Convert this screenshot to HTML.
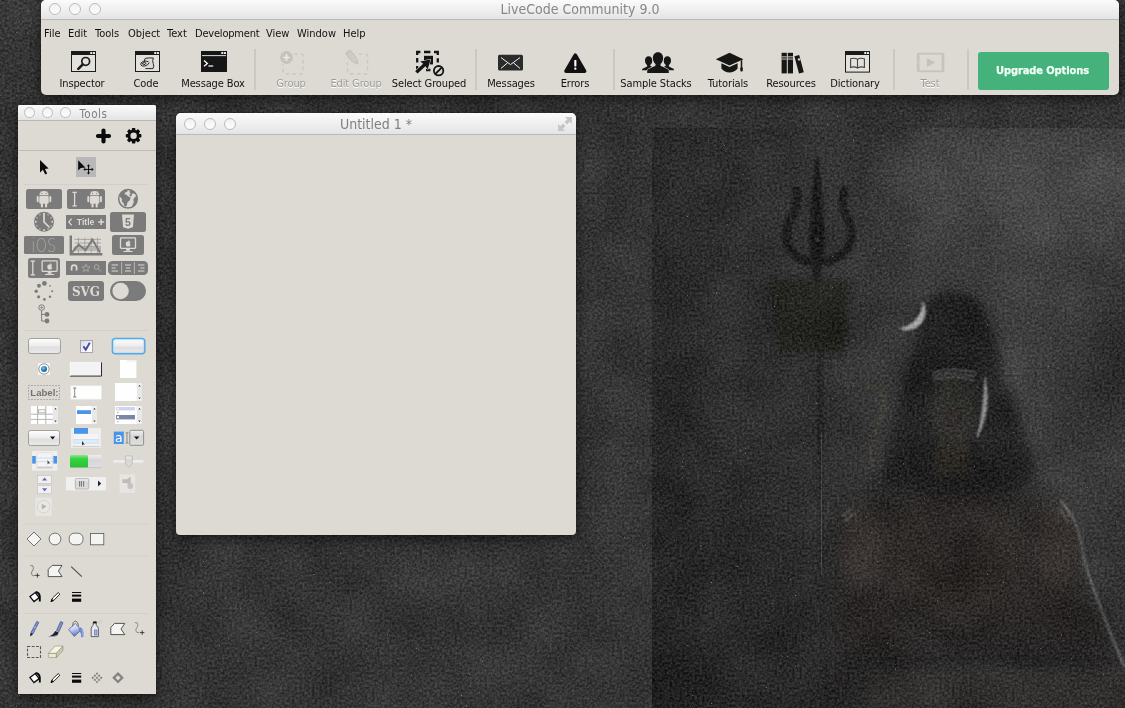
<!DOCTYPE html>
<html lang="en">
<head>
<meta charset="utf-8">
<title>LiveCode Community 9.0</title>
<style>
*{box-sizing:border-box;margin:0;padding:0}
html,body{width:1125px;height:708px;overflow:hidden}
body{position:relative;background:#343434;font-family:"DejaVu Sans Condensed","DejaVu Sans","Liberation Sans",sans-serif;font-size:11px;color:#111}
.abs{position:absolute}
#desk{position:absolute;left:0;top:0;width:1125px;height:708px;overflow:hidden}
.win{position:absolute;will-change:transform;background:#dddad3;border-radius:5px 5px 0 0;box-shadow:0 4px 14px rgba(0,0,0,.55),0 0 1px rgba(0,0,0,.7)}
.tb{position:absolute;left:0;top:0;right:0;border-radius:5px 5px 0 0;background:linear-gradient(#fbfbfb,#e4e4e4);border-bottom:1px solid #b9b9b9}
.tl{position:absolute;width:12px;height:12px;border-radius:50%;border:1px solid #bcbcbc;background:linear-gradient(#f1f1f1,#fdfdfd)}
.ttl{position:absolute;left:0;right:0;text-align:center;color:#808080;white-space:nowrap}
/* main window */
#main{left:41px;top:0;width:1078px;height:95px;border-radius:5px}
#main .tb{height:20px}
#main .ttl{top:0;font-size:14px;line-height:19px;color:#878787}
.menu{position:absolute;top:26px;font-size:11px;line-height:16px;white-space:nowrap;color:#111}
.tool{position:absolute;top:77px;letter-spacing:-0.12px;font-size:11px;line-height:14px;white-space:nowrap;text-align:center;transform:translateX(-50%);color:#111}
.tool.dis{color:#9c9c9c;text-shadow:0 1px 0 #fff}
.sep{position:absolute;top:49px;width:2px;height:41px;background:#cbc8c1}
#upg{position:absolute;left:937px;top:52px;width:131px;height:38px;border-radius:3px;background:#45b17b;color:#f0fff6;font-weight:bold;font-size:11px;line-height:37px;letter-spacing:-0.1px;padding-right:2px;-webkit-text-stroke:0.25px #f0fff6;text-align:center}
/* tools */
#tools{left:18px;top:105px;width:138px;height:588.5px;border-radius:2px 2px 0 0}
#tools .tb{height:16px;border-radius:2px 2px 0 0}
#tools .ttl{top:1.5px;font-size:11.5px;line-height:15px;text-align:left;left:61.5px;letter-spacing:0.5px}
.hr{position:absolute;left:8px;width:122px;height:1px;background:#cfccc5}
/* stack */
#stack{left:176px;top:113px;width:400px;height:422px;border-radius:5px 5px 4px 4px}
#stack .tb{height:22px}
#stack .ttl{top:0;font-size:14px;line-height:22px}
</style>
</head>
<body>
<div id="desk">
<svg width="1125" height="708" viewBox="0 0 1125 708">
  <defs>
    <filter id="grain" x="0" y="0" width="100%" height="100%" color-interpolation-filters="sRGB">
      <feTurbulence type="fractalNoise" baseFrequency="0.4" numOctaves="3" seed="11" result="n"/>
      <feColorMatrix in="n" type="matrix" values="1 0 0 0 0  1 0 0 0 0  1 0 0 0 0  0 0 0 0 1" result="g"/>
      <feComposite in="SourceGraphic" in2="g" operator="arithmetic" k1="0" k2="1" k3="0.26" k4="-0.13" result="c1"/>
      <feTurbulence type="fractalNoise" baseFrequency="0.02" numOctaves="2" seed="5" result="n2"/>
      <feColorMatrix in="n2" type="matrix" values="1 0 0 0 0  1 0 0 0 0  1 0 0 0 0  0 0 0 0 1" result="g2"/>
      <feComposite in="c1" in2="g2" operator="arithmetic" k1="0" k2="1" k3="0.09" k4="-0.045" result="c2"/>
      <feTurbulence type="fractalNoise" baseFrequency="0.38" numOctaves="1" seed="23" result="n3"/>
      <feColorMatrix in="n3" type="matrix" values="0 0 0 0 0.62  0 0 0 0 0.62  0 0 0 0 0.62  10 0 0 0 -7.7" result="sp"/>
      <feMerge><feMergeNode in="c2"/><feMergeNode in="sp"/></feMerge>
    </filter>
    <filter id="b3" x="-20%" y="-20%" width="140%" height="140%"><feGaussianBlur stdDeviation="3"/></filter>
    <filter id="b5" x="-30%" y="-30%" width="160%" height="160%"><feGaussianBlur stdDeviation="5"/></filter>
    <filter id="b8" x="-30%" y="-30%" width="160%" height="160%"><feGaussianBlur stdDeviation="8"/></filter>
    <filter id="b20" x="-50%" y="-50%" width="200%" height="200%"><feGaussianBlur stdDeviation="22"/></filter>
    <filter id="b1" x="-20%" y="-20%" width="140%" height="140%"><feGaussianBlur stdDeviation="0.8"/></filter>
    <linearGradient id="picg" x1="0" y1="0" x2="1" y2="0"><stop offset="0" stop-color="#2a2a2a"/><stop offset="0.3" stop-color="#323232"/><stop offset="0.65" stop-color="#3b3b3b"/><stop offset="1" stop-color="#3e3e3e"/></linearGradient>
    <linearGradient id="picv" x1="0" y1="0" x2="0" y2="1"><stop offset="0" stop-color="#000" stop-opacity="0"/><stop offset="0.55" stop-color="#000" stop-opacity="0.02"/><stop offset="1" stop-color="#000" stop-opacity="0.28"/></linearGradient>
    <clipPath id="picclip"><rect x="652" y="128" width="473" height="580"/></clipPath>
  </defs>
  <g filter="url(#grain)">
    <rect width="1125" height="708" fill="#353535"/>
    <rect x="652" y="128" width="473" height="580" fill="url(#picg)"/>
    <g clip-path="url(#picclip)">
      <!-- haze -->
      <rect x="652" y="128" width="473" height="580" fill="url(#picv)"/>
      <ellipse cx="1030" cy="185" rx="130" ry="60" fill="#4a4a4a" filter="url(#b20)" opacity="0.900"/>
      <ellipse cx="1030" cy="330" rx="26" ry="90" fill="#474747" filter="url(#b20)" opacity="0.800"/>
      <ellipse cx="1105" cy="375" rx="40" ry="65" fill="#2c2c2c" filter="url(#b20)" opacity="0.800"/>
      <ellipse cx="760" cy="620" rx="90" ry="110" fill="#292929" filter="url(#b20)" opacity="0.700"/>
      <!-- body -->
      <path d="M838 708 L836 570 Q838 520 880 500 L925 482 L985 482 L1030 496 Q1066 508 1072 560 L1125 680 V708Z" fill="#2a2827" filter="url(#b8)" opacity="0.85"/>
      <ellipse cx="955" cy="560" rx="70" ry="60" fill="#302d2a" filter="url(#b8)" opacity="0.700"/>
      <rect x="840" y="650" width="285" height="58" fill="#262626" filter="url(#b8)" opacity="0.800"/>
      <ellipse cx="862" cy="545" rx="22" ry="42" fill="#3a3632" filter="url(#b8)" opacity="0.800"/>
      <ellipse cx="1056" cy="545" rx="22" ry="46" fill="#3a3632" filter="url(#b8)" opacity="0.800"/>
      <path d="M915 490 L955 600 L1000 490Z" fill="#252321" filter="url(#b8)" opacity="0.600"/>
      <rect x="870" y="668" width="255" height="40" fill="#3a3734" filter="url(#b5)" opacity="0.600"/>
      <!-- hair -->
      <ellipse cx="951" cy="317" rx="30" ry="23" fill="#222" filter="url(#b3)" opacity="0.900"/>
      <path d="M954 292 Q980 294 988 322 Q1000 350 1004 382 Q1016 410 1024 434 Q1034 460 1036 478 Q1000 504 955 494 Q905 502 882 476 Q884 450 891 432 Q900 395 910 358 Q916 330 926 312 Q936 292 954 292Z" fill="#222222" filter="url(#b5)" opacity="0.900"/>
      <!-- face + neck -->
      <ellipse cx="954" cy="410" rx="23" ry="36" fill="#33302d" filter="url(#b5)" opacity="0.900"/>
      <path d="M938 440 h30 l4 36 h-38z" fill="#2e2b28" filter="url(#b3)"/>
      <ellipse cx="953" cy="420" rx="10" ry="14" fill="#2b2825" filter="url(#b3)" opacity="0.800"/>
      <!-- trident -->
      <g filter="url(#b1)" fill="none" stroke="#1f1d1b" stroke-linecap="round" stroke-linejoin="round">
        <path d="M817 158 L811 232 L813 262 L821 262 L823 232Z" fill="#1f1d1b" stroke-width="3.500"/>
        <path d="M796 190 Q800 206 790 220 Q780 242 796 256 Q806 262 816 262" stroke-width="8"/>
        <path d="M844 190 Q840 206 848 220 Q858 242 840 256 Q830 262 818 262" stroke-width="8"/>
        <path d="M817 258 V284" stroke-width="8"/>
        <path d="M803 263 H831" stroke-width="5"/>
        <path d="M774 282 L812 278 L848 282 L846 330 L842 352 H780 L776 330Z" fill="#282624" stroke-width="1" filter="url(#b3)"/>
        <path d="M820 340 V578" stroke-width="3.500" stroke="#2a2826"/>
      </g>
      <path d="M796 192 Q799 206 791 220 Q783 240 797 254 M844 192 Q841 206 847 220 Q855 240 839 254" fill="none" stroke="#3c3834" stroke-width="1" filter="url(#b1)" opacity="0.500"/>
      <circle cx="817" cy="240" r="2" fill="#4a4540" filter="url(#b1)"/>
      <path d="M821.500 432 V575" stroke="#505050" stroke-width="0.800"/>
      <!-- crescent -->
      <path d="M922.700 301 A19 19 0 0 1 898.500 328.300 A27 27 0 0 0 922.700 301Z" fill="#a6a6a6" filter="url(#b1)"/>
      <!-- forehead stripes -->
      <path d="M932 373 Q954 366 976 373 M933 376.500 Q954 370 975 376.500 M934 380 Q954 374 974 380" fill="none" stroke="#7c7c7c" stroke-width="1" filter="url(#b1)"/>
      <!-- cheek highlight -->
      <path d="M985 378 Q992 410 977 438 Q984 410 985 378Z" fill="#8c8c8c" stroke="#8c8c8c" stroke-width="1" filter="url(#b1)"/>
      <!-- snake -->
      <path d="M868 386 Q884 388 884 404 Q880 420 872 440 Q866 460 876 470" fill="none" stroke="#3f3b36" stroke-width="3" filter="url(#b1)"/>
      <!-- arm highlight -->
      <path d="M1060 500 Q1080 520 1084 560 Q1100 610 1125 668" fill="none" stroke="#5e5e5e" stroke-width="2.500" filter="url(#b1)"/>
      <path d="M1060 508 l8 14 M1064 504 l8 14 M842 516 l10 -8 M845 521 l10 -8" stroke="#777" stroke-width="1.200" filter="url(#b1)"/>
    </g>
  </g>
</svg>
</div>

<div class="win" id="main">
  <div class="tb">
    <i class="tl" style="left:8px;top:3px"></i><i class="tl" style="left:28px;top:3px"></i><i class="tl" style="left:48px;top:3px"></i>
    <div class="ttl">LiveCode Community 9.0</div>
  </div>
  <span class="menu" style="left:3px">File</span>
  <span class="menu" style="left:27px">Edit</span>
  <span class="menu" style="left:54px">Tools</span>
  <span class="menu" style="left:87px">Object</span>
  <span class="menu" style="left:126px">Text</span>
  <span class="menu" style="left:154px;letter-spacing:-0.2px">Development</span>
  <span class="menu" style="left:225px">View</span>
  <span class="menu" style="left:256px">Window</span>
  <span class="menu" style="left:302px">Help</span>

  <span class="tool" style="left:41px">Inspector</span>
  <span class="tool" style="left:105px">Code</span>
  <span class="tool" style="left:172px">Message Box</span>
  <span class="tool dis" style="left:250px">Group</span>
  <span class="tool dis" style="left:315px">Edit Group</span>
  <span class="tool" style="left:388px">Select Grouped</span>
  <span class="tool" style="left:470px">Messages</span>
  <span class="tool" style="left:534px">Errors</span>
  <span class="tool" style="left:615px">Sample Stacks</span>
  <span class="tool" style="left:687px">Tutorials</span>
  <span class="tool" style="left:750px">Resources</span>
  <span class="tool" style="left:814px">Dictionary</span>
  <span class="tool dis" style="left:889px">Test</span>
  <i class="sep" style="left:213px"></i>
  <i class="sep" style="left:434px"></i>
  <i class="sep" style="left:572px"></i>
  <i class="sep" style="left:852px"></i>
  <i class="sep" style="left:926px"></i>

  <svg class="abs" style="left:0;top:0" width="1077" height="95" viewBox="41 0 1077 95">
    <!-- Inspector -->
    <g>
      <rect x="71.500" y="51.500" width="24" height="20" fill="#e3e1db" stroke="#1b1b1b"/>
      <rect x="71" y="51" width="25" height="4" fill="#1b1b1b"/>
      <rect x="90.300" y="52.100" width="2" height="2" rx="0.500" fill="#f4f4f4"/><rect x="93" y="52.100" width="2" height="2" rx="0.500" fill="#f4f4f4"/>
      <circle cx="85.700" cy="61.400" r="3.900" fill="none" stroke="#1b1b1b" stroke-width="1.700"/>
      <path d="M82.800 64.400 L78.300 68.900" stroke="#1b1b1b" stroke-width="2.600" stroke-linecap="round"/>
    </g>
    <!-- Code -->
    <g>
      <rect x="135.500" y="51.500" width="24" height="20" fill="#e3e1db" stroke="#1b1b1b"/>
      <rect x="135" y="51" width="25" height="4" fill="#1b1b1b"/>
      <rect x="154.300" y="52.100" width="2" height="2" rx="0.500" fill="#f4f4f4"/><rect x="157" y="52.100" width="2" height="2" rx="0.500" fill="#f4f4f4"/>
      <path d="M145.200 58.400 q4 -0.900 8.200 -0.400 q-1.400 2.800 -0.200 5.400 q1.400 2.800 -0.200 5.200 h-7.600" fill="#dbd9d3" stroke="#2a2a2a" stroke-width="1"/>
      <path d="M145.200 58.400 q-1 1.600 -0.800 3" fill="none" stroke="#2a2a2a" stroke-width="1"/>
      <path d="M148.600 62 q-2.200 -1.600 -5.400 -0.600 q-3 1.200 -2.400 3.400 q0.800 1.800 4 1.200 q3.200 -0.800 4.400 -3.200 M142.800 63 q-0.600 1.600 0.800 1.800 q1.800 -0.200 2.400 -1.600 q-1.400 -1.200 -3.200 -0.200z" fill="none" stroke="#222" stroke-width="1"/>
    </g>
    <!-- Message Box -->
    <g>
      <rect x="201" y="51" width="26" height="21" fill="#161616"/>
      <rect x="202" y="55.2" width="24" height="0.9" fill="#f4f4f4"/>
      <rect x="221.300" y="52.100" width="2" height="2" rx="0.500" fill="#f4f4f4"/><rect x="224" y="52.100" width="2" height="2" rx="0.500" fill="#f4f4f4"/>
      <path d="M204 60.6 L207.4 63.4 L204 66.2" fill="none" stroke="#fff" stroke-width="1.3"/>
      <rect x="208.4" y="65.4" width="4.8" height="1.2" fill="#fff"/>
    </g>
    <!-- Group (disabled) -->
    <g>
      <rect x="283" y="54" width="20" height="20" rx="1.5" fill="none" stroke="#c9c7c1" stroke-width="1.4" stroke-dasharray="3.6 3.2" stroke-dashoffset="-3"/>
      <circle cx="286.5" cy="57.5" r="7.4" fill="#dddad3"/>
      <circle cx="286.5" cy="57.5" r="6.4" fill="#c5c3be"/>
      <path d="M283.3 57.5 h6.4 M286.5 54.3 v6.4" stroke="#ecebe7" stroke-width="1.7"/>
    </g>
    <!-- Edit Group (disabled) -->
    <g>
      <rect x="347.5" y="54" width="20" height="20" rx="1.5" fill="none" stroke="#c9c7c1" stroke-width="1.4" stroke-dasharray="3.6 3.2" stroke-dashoffset="-3"/>
      <g transform="translate(352.6 57.6) rotate(-40) scale(1.12)">
        <rect x="-4.2" y="-8.6" width="8.4" height="14" fill="#dddad3"/>
        <rect x="-3" y="-7.4" width="6" height="10.4" rx="1.2" fill="#c6c4be"/>
        <path d="M-1 -5.5 v8 M1 -5.5 v8" stroke="#dddad3" stroke-width="0.7"/>
        <path d="M-3 3.6 h6 l-3 4.6z" fill="#c6c4be"/>
      </g>
    </g>
    <!-- Select Grouped -->
    <g>
      <path d="M417.200 55 V52 H420.400 M424 52 H430.400 M434 52 H437.800 V55 M437.800 58.200 V62.400 M417.200 58 V62.600 M417.200 66 V70 H420 M426 70 H430.400" fill="none" stroke="#141414" stroke-width="2.300"/>
      <rect x="424" y="55.800" width="9" height="8.600" fill="#141414"/>
      <path transform="translate(-1 1.600)" d="M431.400 58 L421.200 60 L424.200 62.200 L416.200 69.600 L418.600 72 L426.400 64.600 L428.800 67.600Z" fill="#141414" stroke="#dddad3" stroke-width="1.100" paint-order="stroke" stroke-linejoin="round"/>
      <circle cx="438.600" cy="70.700" r="6.900" fill="#dddad3"/>
      <circle cx="438.600" cy="70.700" r="4.700" fill="none" stroke="#141414" stroke-width="1.800"/>
      <path d="M435.300 74 L441.900 67.400" stroke="#141414" stroke-width="1.800"/>
    </g>
    <!-- Messages -->
    <g>
      <rect x="498" y="54.8" width="25" height="15.8" rx="1.6" fill="#2b2b2b"/>
      <path d="M501 57.6 L510.5 64.6 L520 57.6 M501 68.4 L507.6 62.8 M520 68.4 L513.4 62.8" fill="none" stroke="#f2f2f2" stroke-width="1"/>
    </g>
    <!-- Errors -->
    <g>
      <path d="M575.3 55.2 L584.6 71.2 H566 Z" fill="#111" stroke="#111" stroke-width="3.6" stroke-linejoin="round"/>
      <rect x="574.3" y="60" width="2.1" height="6.4" rx="0.6" fill="#fff"/>
      <rect x="574.3" y="67.6" width="2.1" height="2.1" rx="0.6" fill="#fff"/>
    </g>
    <!-- Sample Stacks -->
    <g fill="#161616">
      <path d="M648.6 56.2 c2.3 0 3.7 1.8 3.7 4.2 c0 2 -0.9 3.7 -2 4.4 v1.2 l3.6 1.6 v2.6 h-11.8 v-1.2 l5 -2.6 v-1.5 c-1.2 -0.8 -2.1 -2.5 -2.1 -4.5 c0 -2.4 1.3 -4.2 3.6 -4.2z"/>
      <path d="M667.4 56.2 c-2.3 0 -3.7 1.8 -3.7 4.2 c0 2 0.9 3.7 2 4.4 v1.2 l-3.6 1.6 v2.6 h11.8 v-1.2 l-5 -2.6 v-1.5 c1.200 -0.8 2.1 -2.5 2.1 -4.500 c0 -2.4 -1.300 -4.2 -3.600 -4.200z"/>
      <path d="M658 52.200 c3.300 0 5.100 2.500 5.100 5.700 c0 2.700 -1.100 4.900 -2.600 6 v1.900 l6.800 3.200 c1.100 0.500 1.500 1.200 1.500 2.300 v1.700 h-21.600 v-1.700 c0 -1.100 0.400 -1.800 1.500 -2.300 l6.800 -3.200 v-1.900 c-1.500 -1.100 -2.600 -3.300 -2.600 -6 c0 -3.200 1.800 -5.700 5.100 -5.700z" stroke="#dddad3" stroke-width="1.200" paint-order="stroke"/>
    </g>
    <!-- Tutorials -->
    <g fill="#161616">
      <path d="M729.500 52.800 L743.400 59.200 L729.500 65.600 L715.800 59.200Z"/>
      <path d="M721.400 63.200 L729.500 67.000 L737.600 63.200 V68.600 C735.600 71.400 732.400 72.600 729.500 72.600 C726.600 72.600 723.400 71.400 721.400 68.600Z"/>
      <path d="M741.500 60.200 V68.800" stroke="#161616" stroke-width="1.500"/>
      <rect x="740.300" y="67.200" width="2.500" height="4.200" rx="1"/>
    </g>
    <!-- Resources -->
    <g fill="#161616">
      <rect x="781.600" y="52.800" width="5.200" height="20.600"/>
      <rect x="787.800" y="52.800" width="5.200" height="20.600"/>
      <rect x="781.600" y="56.400" width="5.200" height="0.900" fill="#dddad3"/>
      <rect x="787.800" y="56.400" width="5.200" height="0.900" fill="#dddad3"/>
      <rect x="781.600" y="58.600" width="5.200" height="0.900" fill="#dddad3"/>
      <rect x="787.800" y="58.600" width="5.200" height="0.900" fill="#dddad3"/>
      <path d="M794.400 56.200 l4.800 -1.200 4.600 17.200 -4.800 1.300z"/>
      <circle cx="799" cy="59.400" r="1.200" fill="#dddad3"/>
    </g>
    <!-- Dictionary -->
    <g>
      <rect x="845.500" y="51.500" width="24" height="20.600" fill="#e3e1db" stroke="#1b1b1b"/>
      <rect x="845" y="51" width="25" height="4" fill="#1b1b1b"/>
      <rect x="864.300" y="52.100" width="2" height="2" rx="0.500" fill="#f4f4f4"/><rect x="867" y="52.100" width="2" height="2" rx="0.500" fill="#f4f4f4"/>
      <path d="M850.600 58.800 q3.600 -1.400 6.900 0.400 q3.300 -1.800 6.900 -0.400 v8.600 q-3.600 -1.200 -6.900 0.600 q-3.300 -1.800 -6.900 -0.600z M857.500 59.200 v9" fill="#e2e0da" stroke="#444" stroke-width="1.100"/>
    </g>
    <!-- Test (disabled) -->
    <g>
      <rect x="916.800" y="52.800" width="27.600" height="19.400" rx="2" fill="#c6c4be"/>
      <rect x="919.600" y="54.600" width="22" height="15.800" fill="#dddad3"/>
      <circle cx="918.200" cy="62.500" r="0.800" fill="#dddad3"/>
      <path d="M926.800 58 L935.400 62.500 L926.800 67Z" fill="#c4c2bc"/>
    </g>
  </svg>
  <div id="upg">Upgrade Options</div>
</div>

<div class="win" id="tools">
  <div class="tb">
    <i class="tl" style="left:6px;top:2px;width:11px;height:11px"></i><i class="tl" style="left:24px;top:2px;width:11px;height:11px"></i><i class="tl" style="left:42px;top:2px;width:11px;height:11px"></i>
    <div class="ttl">Tools</div>
  </div>

  <svg class="abs" style="left:0;top:0" width="138" height="588" viewBox="18 105 138 588" font-family="'DejaVu Sans Condensed','DejaVu Sans','Liberation Sans',sans-serif">
    <!-- header: plus & gear -->
    <path d="M103.500 130.500 V141.500 M98 136 H109" stroke="#0b0b0b" stroke-width="4.200" stroke-linecap="round"/>
    <g transform="translate(133.600 135.800)">
      <g fill="#0b0b0b">
        <rect x="-1.750" y="-7.800" width="3.500" height="15.600" rx="0.800"/>
        <rect x="-1.750" y="-7.800" width="3.500" height="15.600" rx="0.800" transform="rotate(45)"/>
        <rect x="-1.750" y="-7.800" width="3.500" height="15.600" rx="0.800" transform="rotate(90)"/>
        <rect x="-1.750" y="-7.800" width="3.500" height="15.600" rx="0.800" transform="rotate(135)"/>
        <circle r="6"/>
      </g>
      <circle r="3.200" fill="#dddad3"/>
    </g>
    <rect x="18" y="150" width="138" height="1" fill="#bfbcb5"/>
    <!-- pointer tools -->
    <path d="M40 160 V172.400 L42.900 169.800 L45.200 174.600 L47.200 173.600 L45 169 L48.600 168.600Z" fill="#0b0b0b"/>
    <rect x="76" y="157" width="20" height="20" fill="#b8b8b8"/>
    <path d="M78.200 160.200 V170.400 L80.800 168 L85.400 167.400Z" fill="#0b0b0b"/>
    <path d="M88.500 165 V173.800 M84.100 169.400 H92.900" stroke="#0b0b0b" stroke-width="1"/>
    <path d="M88.500 164.200 l1.700 2 h-3.400z M88.500 174.600 l1.700 -2 h-3.400z M83.300 169.400 l2 -1.700 v3.400z M93.700 169.400 l-2 -1.700 v3.400z" fill="#0b0b0b"/>
    <rect x="24" y="184" width="124" height="1" fill="#d2cfc8"/>

    <!-- widgets row 1 -->
    <rect x="26" y="189" width="36" height="20" rx="2.500" fill="#7b7b7b"/>
    <g transform="translate(44 199.6) scale(1.3)" fill="#dddad3">
      <path d="M-3.6 -3.4 a3.6 3.3 0 0 1 7.2 0z"/>
      <path d="M-2.6 -6.4 l0.9 1.4 M2.600 -6.400 l-0.900 1.400" stroke="#dddad3" stroke-width="0.500"/>
      <rect x="-3.600" y="-2.800" width="7.200" height="6" rx="0.800"/>
      <rect x="-5.600" y="-2.800" width="1.500" height="4.800" rx="0.750"/>
      <rect x="4.100" y="-2.800" width="1.500" height="4.800" rx="0.750"/>
      <rect x="-2.400" y="2.600" width="1.600" height="3.400" rx="0.700"/>
      <rect x="0.800" y="2.600" width="1.600" height="3.400" rx="0.700"/>
      <circle cx="-1.600" cy="-4.800" r="0.450" fill="#7b7b7b"/><circle cx="1.600" cy="-4.800" r="0.450" fill="#7b7b7b"/>
    </g>
    <rect x="67" y="189" width="38" height="20" rx="2.500" fill="#7b7b7b"/>
    <path d="M72.39999999999999 192.4 h4.4 M72.39999999999999 205.8 h4.4 M74.6 192.4 V205.8" stroke="#dddad3" stroke-width="1.3" fill="none"/>
    <g transform="translate(94.6 199.6) scale(1.3)" fill="#dddad3">
      <path d="M-3.6 -3.4 a3.6 3.3 0 0 1 7.2 0z"/>
      <path d="M-2.6 -6.4 l0.9 1.4 M2.600 -6.400 l-0.900 1.400" stroke="#dddad3" stroke-width="0.500"/>
      <rect x="-3.600" y="-2.800" width="7.200" height="6" rx="0.800"/>
      <rect x="-5.600" y="-2.800" width="1.500" height="4.800" rx="0.750"/>
      <rect x="4.100" y="-2.800" width="1.500" height="4.800" rx="0.750"/>
      <rect x="-2.400" y="2.600" width="1.600" height="3.400" rx="0.700"/>
      <rect x="0.800" y="2.600" width="1.600" height="3.400" rx="0.700"/>
      <circle cx="-1.600" cy="-4.800" r="0.450" fill="#7b7b7b"/><circle cx="1.600" cy="-4.800" r="0.450" fill="#7b7b7b"/>
    </g>
    <g>
      <circle cx="128" cy="198.800" r="9.300" fill="#dddad3" stroke="#7b7b7b" stroke-width="1.500"/>
      <path d="M120.400 193.400 q1.800 -2.600 4.600 -3.800 l2.600 0.400 -0.600 2 -2 0.600 -0.400 1.600 1.600 0.200 1.800 1.800 2.600 1.200 -0.600 2.600 -2.600 2.400 -0.400 2.600 -1.600 1.800 q-1.400 -0.800 -1.800 -3.600 l-1.800 -1.800 0.200 -2.400 -2 -2.200 q-0.400 -1.800 0.400 -3.400z" fill="#7b7b7b"/>
      <path d="M130.600 190 q3.200 0.600 5.200 3.200 l-1.600 0.800 -1.200 -0.800 -1.400 1 0.400 1.600 -2 0.800 -0.600 -1.600 1.200 -1.800 -1.200 -1.200z" fill="#7b7b7b"/>
      <path d="M136.600 195.600 q1.200 3.200 0 6.600 q-1.400 3.200 -4.400 4.800 l0.400 -2.600 1.400 -2.400 -0.800 -2.200 1.400 -2.400z" fill="#7b7b7b"/>
      </g>
    <!-- row 2 -->
    <g>
      <circle cx="44" cy="221.800" r="10" fill="#7b7b7b"/>
      <path d="M44 214 V222 L49 227" stroke="#dddad3" stroke-width="1.700" fill="none" stroke-linecap="round"/>
      <g fill="#dddad3">
        <circle cx="44" cy="213.600" r="0.950"/><circle cx="44" cy="230" r="0.950"/><circle cx="35.800" cy="221.800" r="0.950"/><circle cx="52.200" cy="221.800" r="0.950"/>
        <circle cx="39.900" cy="214.700" r="0.650"/><circle cx="48.100" cy="214.700" r="0.650"/><circle cx="36.900" cy="217.700" r="0.650"/><circle cx="51.100" cy="217.700" r="0.650"/>
        <circle cx="39.900" cy="228.900" r="0.650"/><circle cx="48.100" cy="228.900" r="0.650"/><circle cx="36.900" cy="225.900" r="0.650"/><circle cx="51.100" cy="225.900" r="0.650"/>
      </g>
    </g>
    <rect x="66" y="215" width="40" height="14" fill="#7b7b7b"/>
    <path d="M71.600 218.600 L68.800 222 L71.600 225.400" stroke="#dddad3" stroke-width="1.300" fill="none"/>
    <text x="85.600" y="225.300" font-size="8.600" font-weight="bold" fill="#dddad3" text-anchor="middle" font-family="'Liberation Sans',sans-serif">Title</text>
    <path d="M98.200 222 h6 M101.200 219 v6" stroke="#dddad3" stroke-width="1.500"/>
    <rect x="110" y="212" width="36" height="20" rx="2.500" fill="#7b7b7b"/>
    <path d="M122 214.600 h12 l-1.100 12.600 -4.900 1.600 -4.900 -1.600z" fill="#dddad3"/>
    <text x="128" y="226" font-size="10.500" font-weight="bold" fill="#7b7b7b" text-anchor="middle" font-family="'Liberation Sans',sans-serif">5</text>
    <!-- row 3 -->
    <rect x="24" y="236" width="40" height="18" rx="1.500" fill="#7b7b7b"/>
    <text x="43.800" y="252.300" font-size="20" fill="#aaa8a3" text-anchor="middle" font-family="'DejaVu Sans','DejaVu Sans Light','Liberation Sans',sans-serif" font-weight="200" textLength="25" lengthAdjust="spacingAndGlyphs">iOS</text>
    <g>
      <path d="M74.600 239.400 h26.400 M74.600 243 h26.400 M74.600 246.600 h26.400 M74.600 250.200 h26.400 M78.400 237.600 v16 M84.800 237.600 v16 M91.200 237.600 v16 M97.600 237.600 v16" stroke="#9a9893" stroke-width="0.800"/>
      <rect x="73" y="247.200" width="28" height="2.400" fill="#b4b2ac"/>
      <path d="M70.800 235.400 V254.200 H102.400" stroke="#7b7b7b" stroke-width="2.400" fill="none"/>
      <path d="M72 252.600 L78.600 244.600 L85.600 250 L92.400 239.600 L100 252.600" stroke="#7b7b7b" stroke-width="2" fill="none"/>
    </g>
    <rect x="112" y="235" width="32" height="20" rx="2.500" fill="#7b7b7b"/>
    <g transform="translate(128 245)">
      <rect x="-7.500" y="-7.200" width="15" height="10.600" rx="0.800" fill="none" stroke="#dddad3" stroke-width="1.300"/>
      <path d="M-1.600 3.400 h3.200 l0.600 2.400 h-4.400z M-4.600 6 h9.200 v1 h-9.200z" fill="#dddad3"/>
      <path d="M0.200 -3.800 q0.200 -1.200 1.200 -1.400 q0 1.200 -1.200 1.400z M-2.300 -1.600 c0 -1.800 1.400 -2.400 2.400 -1.800 c1 -0.600 2.300 -0.200 2.400 0.600 c-1 0.600 -1 2 0.200 2.500 c-0.500 1.500 -1.400 2.200 -2.600 1.700 c-1.200 0.500 -2.400 -0.800 -2.400 -3z" fill="#dddad3"/>
    </g>
    <!-- row 4 -->
    <rect x="28" y="258" width="32" height="20" rx="2.500" fill="#7b7b7b"/>
    <path d="M30.599999999999998 261.2 h4.4 M30.599999999999998 274.8 h4.4 M32.8 261.2 V274.8" stroke="#dddad3" stroke-width="1.3" fill="none"/>
    <g transform="translate(49.6 268)">
      <rect x="-7.500" y="-7.200" width="15" height="10.600" rx="0.800" fill="none" stroke="#dddad3" stroke-width="1.300"/>
      <path d="M-1.600 3.400 h3.200 l0.600 2.400 h-4.400z M-4.600 6 h9.200 v1 h-9.200z" fill="#dddad3"/>
      <path d="M0.200 -3.800 q0.200 -1.200 1.200 -1.400 q0 1.200 -1.200 1.400z M-2.300 -1.600 c0 -1.800 1.400 -2.400 2.400 -1.800 c1 -0.600 2.300 -0.200 2.400 0.600 c-1 0.600 -1 2 0.200 2.500 c-0.500 1.500 -1.400 2.200 -2.600 1.700 c-1.200 0.500 -2.400 -0.800 -2.400 -3z" fill="#dddad3"/>
    </g>
    <rect x="66" y="261" width="40" height="14" fill="#7b7b7b"/>
    <path d="M71.600 270.600 v-3 a2.500 2.500 0 0 1 5 0 v3" stroke="#dddad3" stroke-width="1.700" fill="none"/>
    <path d="M86 264.200 l1.100 2.600 2.800 0.200 -2.200 1.800 0.700 2.800 -2.400 -1.500 -2.400 1.500 0.700 -2.800 -2.200 -1.800 2.800 -0.200z" fill="none" stroke="#b8b6b0" stroke-width="0.700"/>
    <circle cx="96.600" cy="267" r="2.300" fill="none" stroke="#b8b6b0" stroke-width="0.800"/><path d="M98.300 268.800 L101 271.600" stroke="#b8b6b0" stroke-width="0.800"/>
    <rect x="108" y="261" width="40" height="14" rx="4.500" fill="#7b7b7b"/>
    <path d="M121.600 262 v12 M134.400 262 v12" stroke="#dddad3" stroke-width="0.600"/>
    <path d="M111.600 265 h6.400 M111.600 268 h4 M111.600 271 h6.400 M125 265 h6 M126 268 h4 M125 271 h6 M138 265 h6.400 M140.400 268 h4 M138 271 h6.400" stroke="#dddad3" stroke-width="1.100"/>
    <!-- row 5 -->
    <g fill="#7b7b7b">
      <circle cx="44.400" cy="283.400" r="2.400"/><circle cx="39" cy="285.800" r="2"/><circle cx="36.200" cy="291.200" r="1.700"/><circle cx="38.600" cy="296.800" r="1.600"/>
      <circle cx="44.400" cy="299.400" r="1.400"/><circle cx="50" cy="296.800" r="1.200"/><circle cx="52.200" cy="291.200" r="1"/><circle cx="50" cy="285.800" r="0.900"/>
    </g>
    <rect x="68" y="281" width="36" height="20" rx="3" fill="#7b7b7b"/>
    <text x="86" y="296.400" font-size="13.500" font-weight="bold" fill="#dddad3" text-anchor="middle" font-family="'DejaVu Serif','Liberation Serif',serif" textLength="28" lengthAdjust="spacingAndGlyphs">SVG</text>
    <rect x="110" y="281" width="36" height="20" rx="10" fill="#7b7b7b"/>
    <circle cx="120.600" cy="291" r="8.200" fill="#dddad3"/>
    <!-- row 6 tree -->
    <g>
      <path d="M41.600 310.600 V321 H45 M41.600 314.400 H45" stroke="#7b7b7b" stroke-width="1" fill="none"/>
      <circle cx="41.600" cy="307.600" r="2.800" fill="#dddad3" stroke="#7b7b7b" stroke-width="1"/>
      <path d="M40.200 307.600 h2.800 M41.600 306.200 v2.800" stroke="#7b7b7b" stroke-width="0.700"/>
      <circle cx="47" cy="314.400" r="2.400" fill="#7b7b7b"/><circle cx="47" cy="321" r="2.400" fill="#7b7b7b"/>
    </g>
    <rect x="24" y="330" width="124" height="1" fill="#d2cfc8"/>

    <defs>
      <linearGradient id="gbtn" x1="0" y1="0" x2="0" y2="1"><stop offset="0" stop-color="#ffffff"/><stop offset="0.500" stop-color="#ececec"/><stop offset="0.560" stop-color="#dedede"/><stop offset="1" stop-color="#e9e9e9"/></linearGradient>
      <linearGradient id="ggreen" x1="0" y1="0" x2="0" y2="1"><stop offset="0" stop-color="#8be68f"/><stop offset="0.300" stop-color="#35d23f"/><stop offset="1" stop-color="#27c132"/></linearGradient>
      <linearGradient id="ggrey" x1="0" y1="0" x2="0" y2="1"><stop offset="0" stop-color="#efefef"/><stop offset="0.400" stop-color="#d6d6d6"/><stop offset="1" stop-color="#dedede"/></linearGradient>
      <linearGradient id="gchk" x1="0" y1="0" x2="1" y2="1"><stop offset="0" stop-color="#d3d6e2"/><stop offset="0.7" stop-color="#fbfbfd"/><stop offset="1" stop-color="#ffffff"/></linearGradient>
      <linearGradient id="gbucket" x1="0.3" y1="0" x2="0.6" y2="1"><stop offset="0" stop-color="#f6f7fd"/><stop offset="0.45" stop-color="#c2cdf0"/><stop offset="1" stop-color="#4f6cc0"/></linearGradient>
      <radialGradient id="gradio" cx="0.400" cy="0.350" r="0.700"><stop offset="0" stop-color="#7fd0f5"/><stop offset="0.500" stop-color="#2b86c2"/><stop offset="1" stop-color="#1a5a8c"/></radialGradient>
    </defs>
    <!-- row A -->
    <rect x="28.500" y="338.500" width="32" height="15" rx="2.500" fill="url(#gbtn)" stroke="#989898" stroke-width="0.900"/>
    <rect x="80.500" y="340.500" width="12" height="12" fill="url(#gchk)" stroke="#9d9da6" stroke-width="0.900"/>
    <path d="M83.400 346.400 L85.800 349.800 L89.800 342.600" stroke="#4747a2" stroke-width="1.900" fill="none"/>
    <rect x="112.400" y="338.400" width="32.400" height="15.400" rx="3" fill="url(#gbtn)" stroke="#56a9e2" stroke-width="1.500"/>
    <rect x="113.700" y="339.700" width="29.800" height="12.800" rx="2" fill="none" stroke="#b9def5" stroke-width="0.800"/>
    <!-- row B -->
    <rect x="38" y="363" width="12" height="12" fill="#f4f4f4"/>
    <circle cx="44" cy="369" r="5.200" fill="#fbfbfb" stroke="#8a8a8a" stroke-width="0.900"/>
    <circle cx="44" cy="369" r="3" fill="url(#gradio)"/>
    <rect x="70" y="362.400" width="32" height="14.200" fill="#f3f3f3"/>
    <path d="M70 376.100 H101.500 V362.400" stroke="#2a2a2a" stroke-width="1" fill="none"/>
    <path d="M70.300 376 V362.700 H101" stroke="#fff" stroke-width="0.700" fill="none"/>
    <rect x="120" y="360" width="16.400" height="18" fill="#fefefe"/>
    <path d="M127 361 h7.500 l1.600 -1.200" stroke="#e2e2e2" stroke-width="0.900" fill="none"/>
    <!-- row C -->
    <rect x="28.500" y="385.500" width="31" height="14" fill="none" stroke="#808080" stroke-width="1" stroke-dasharray="1 2"/>
    <text x="44.400" y="396.400" font-size="9.600" font-weight="bold" fill="#727272" text-anchor="middle" font-family="'Liberation Sans',sans-serif">Label:</text>
    <rect x="70.800" y="385.800" width="30.600" height="13.400" fill="#fefefe" stroke="#ecebe8" stroke-width="0.600"/>
    <path d="M73 388 h3.400 M73 397 h3.400 M74.700 388 V397" stroke="#6c6c6c" stroke-width="0.800" fill="none"/>
    <rect x="115" y="383" width="22" height="18" fill="#fefefe"/>
    <rect x="137" y="383" width="5" height="18" fill="#e9e9e9"/>
    <rect x="137" y="383" width="5" height="5" fill="#f6f6f6" stroke="#d4d4d4" stroke-width="0.400"/>
    <rect x="137" y="396" width="5" height="5" fill="#f6f6f6" stroke="#d4d4d4" stroke-width="0.400"/>
    <path d="M139.5 384.7 l1.300 1.800 h-2.600z M139.5 399.3 l1.300 -1.800 h-2.600z" fill="#444"/>
    <!-- row D -->
    <rect x="31" y="406" width="22" height="18" fill="#fefefe"/>
    <path d="M31 414.200 h22 M31 419.400 h22 M37.600 406 v18 M45.800 406 v18" stroke="#adadad" stroke-width="0.900"/>
    <rect x="38.400" y="409.800" width="6.800" height="3" fill="#fff" stroke="#a6a6a6" stroke-width="0.800"/>
    <rect x="53" y="406" width="5" height="18" fill="#e9e9e9"/>
    <rect x="53" y="406" width="5" height="5" fill="#f6f6f6" stroke="#d4d4d4" stroke-width="0.400"/>
    <rect x="53" y="419" width="5" height="5" fill="#f6f6f6" stroke="#d4d4d4" stroke-width="0.400"/>
    <path d="M55.5 407.7 l1.300 1.800 h-2.600z M55.5 422.3 l1.300 -1.800 h-2.600z" fill="#444"/>
    <rect x="76" y="406" width="16" height="18" fill="#fefefe"/>
    <rect x="77" y="410.200" width="14" height="3.800" fill="#4a94ea"/>
    <rect x="92" y="406" width="5" height="18" fill="#e9e9e9"/>
    <rect x="92" y="406" width="5" height="5" fill="#f6f6f6" stroke="#d4d4d4" stroke-width="0.400"/>
    <rect x="92" y="419" width="5" height="5" fill="#f6f6f6" stroke="#d4d4d4" stroke-width="0.400"/>
    <path d="M94.5 407.7 l1.300 1.800 h-2.600z M94.5 422.3 l1.300 -1.800 h-2.600z" fill="#444"/>
    <rect x="115" y="406" width="22" height="18" fill="#fefefe"/>
    <rect x="116" y="407" width="19" height="3.400" fill="#ccd4f0"/>
    <rect x="117" y="407.700" width="2" height="2" fill="#eef1fb"/>
    <rect x="117" y="411.700" width="1.600" height="1.600" fill="#b9c9b9"/>
    <rect x="116" y="415" width="19" height="4.400" fill="#7a86a6"/>
    <rect x="117" y="416.200" width="2" height="2" fill="#fff"/>
    <rect x="117" y="420.800" width="1.600" height="1.600" fill="#c4c4d4"/>
    <rect x="137" y="406" width="5" height="18" fill="#e9e9e9"/>
    <rect x="137" y="406" width="5" height="5" fill="#f6f6f6" stroke="#d4d4d4" stroke-width="0.400"/>
    <rect x="137" y="419" width="5" height="5" fill="#f6f6f6" stroke="#d4d4d4" stroke-width="0.400"/>
    <path d="M139.5 407.7 l1.300 1.800 h-2.600z M139.5 422.3 l1.300 -1.800 h-2.600z" fill="#444"/>
    <!-- row E -->
    <rect x="28.500" y="430.500" width="31" height="15" rx="2" fill="url(#gbtn)" stroke="#989898" stroke-width="0.900"/>
    <path d="M50 436.600 h5.200 l-2.600 3z" fill="#111"/>
    <rect x="71" y="428" width="30" height="19.800" fill="#eeeeee"/>
    <rect x="74" y="428" width="14" height="5.800" fill="#4a94ea"/>
    <rect x="74" y="434" width="24" height="11" fill="#f5f5f5"/>
    <rect x="74" y="439.400" width="24" height="3.800" fill="#dcedf8" stroke="#b5d5ea" stroke-width="0.500"/>
    <path d="M82 441 v4.400 l1.200 -1 1.600 0.200z" fill="#333"/>
    <path d="M72.600 446.600 h27" stroke="#cfcfcf" stroke-width="1"/>
    <rect x="113.800" y="431.600" width="10" height="12.400" fill="#4a94ea"/>
    <text x="118.800" y="441.800" font-size="12.500" fill="#fff" text-anchor="middle" font-family="'DejaVu Sans','Liberation Sans',sans-serif">a</text>
    <path d="M125.600 432.800 h2.800 M125.600 443 h2.800 M127 432.800 V443" stroke="#777" stroke-width="0.800" fill="none"/>
    <rect x="129.800" y="430.300" width="13.800" height="15" rx="1" fill="url(#ggrey)" stroke="#8f8f8f" stroke-width="1"/>
    <path d="M134 436.400 h5.400 l-2.700 3.200z" fill="#111"/>
    <!-- row F -->
    <rect x="32" y="451" width="25.400" height="19.600" fill="#efefef"/>
    <rect x="32.200" y="456" width="3.600" height="7.600" fill="#4a94ea"/>
    <rect x="53.400" y="456" width="3.600" height="7.600" fill="#4a94ea"/>
    <rect x="36.800" y="452.800" width="15.600" height="13.600" rx="1" fill="#f4f4f4" stroke="#d9d9d9" stroke-width="0.600"/>
    <path d="M35.800 458 h17.600 M35.800 461.600 h17.600" stroke="#b5d5ea" stroke-width="0.700"/>
    <path d="M36.600 467.800 h16" stroke="#c4c4c4" stroke-width="1.200"/>
    <path d="M47.400 459.800 v4.800 l1.200 -1.100 1.800 0.200z" fill="#333" stroke="#fff" stroke-width="0.300"/>
    <rect x="70" y="455" width="31.600" height="12.800" rx="1.200" fill="url(#ggrey)"/>
    <rect x="70" y="455" width="18" height="12.800" rx="1.200" fill="url(#ggreen)"/>
    <path d="M70 467.600 h31.600" stroke="#b9b9b9" stroke-width="0.600"/>
    <rect x="113" y="460" width="30.600" height="2.800" rx="1.400" fill="#ededed"/>
    <path d="M125.400 456 h6.800 v7.600 l-3.400 3.600 -3.400 -3.600z" fill="url(#ggrey)" stroke="#a9a9a9" stroke-width="0.600"/>
    <!-- row G -->
    <rect x="37.300" y="475.300" width="14.400" height="8" fill="#f1f1f1" stroke="#bdbdbd" stroke-width="0.600"/>
    <rect x="37.300" y="485.300" width="14.400" height="8.400" fill="#f1f1f1" stroke="#bdbdbd" stroke-width="0.600"/>
    <path d="M44.600 477.400 l2.600 3.200 h-5.200z M44.600 491.400 l2.600 -3.200 h-5.200z" fill="#6a6ab4"/>
    <rect x="66" y="477" width="40" height="13.400" fill="#f0f0f0"/>
    <rect x="75.400" y="478.600" width="13.400" height="10.400" rx="1" fill="url(#ggrey)" stroke="#a4a4a4" stroke-width="0.700"/>
    <path d="M79.600 481 v5.600 M81.400 481 v5.600 M83.600 481 v5.600" stroke="#666" stroke-width="0.900"/>
    <path d="M98 480.600 l3.200 3 -3.200 3z" fill="#222"/>
    <rect x="119.600" y="474.400" width="15.600" height="18.600" fill="#e6e5e1"/>
    <path d="M122.400 479.200 h4.200 l4 -2.400 v8.600 l-4 -2.400 h-4.200z" fill="#bdbcb8"/>
    <circle cx="130.200" cy="486" r="2.900" fill="#c4c3bf"/>
    <!-- row H -->
    <rect x="35.400" y="497.600" width="16.200" height="18.200" fill="#e7e6e2"/>
    <circle cx="43.600" cy="506.600" r="6.200" fill="#e9e8e5" stroke="#cfcecb" stroke-width="0.800"/>
    <path d="M41.800 503.800 l4.800 2.800 -4.800 2.800z" fill="#b5b4b1"/>
    <rect x="24" y="523.500" width="124" height="1" fill="#d2cfc8"/>
    <!-- shapes -->
    <g fill="#f4f4f3" stroke="#555" stroke-width="0.800">
      <path d="M34 532 L41 539 L34 546 L27 539Z"/>
      <circle cx="55" cy="539" r="5.900"/>
      <rect x="69.200" y="533.200" width="13.800" height="11.600" rx="5"/>
      <rect x="90.400" y="533.400" width="13.400" height="11.400"/>
    </g>
    <rect x="24" y="555.500" width="124" height="1" fill="#d2cfc8"/>
    <!-- curve / polygon / line -->
    <path d="M30.400 565.600 q3 -0.800 3 2.200 q0 2 -1.400 3.600 q-1.400 2.200 0.200 3.800 q1.400 1.200 3 0" fill="none" stroke="#666" stroke-width="0.800"/>
    <path d="M35.200 575.400 h4.400 M37.400 573.200 v4.400" stroke="#222" stroke-width="0.800"/>
    <path d="M52.200 565.400 H62 L58.400 571 L62 576.600 H48.200 V569.400Z" fill="#f4f4f3" stroke="#444" stroke-width="0.900"/>
    <path d="M71.200 566.600 L81.800 576.600" stroke="#555" stroke-width="1.300"/>
    <!-- bucket / pen / lines -->
    <g>
      <path d="M30 596.600 L35.200 592.600 L39.200 597.600 L34 601.600Z" fill="#fff" stroke="#0b0b0b" stroke-width="1.300"/>
      <path d="M35.600 592 q3.600 0.400 4.200 4.400 v5" fill="none" stroke="#0b0b0b" stroke-width="1.900"/>
      <path d="M51 601.600 L52.600 598 L58.200 592.600 L59.800 594.200 L54.400 599.800Z" fill="#fff" stroke="#0b0b0b" stroke-width="0.900"/>
      <path d="M51 601.600 l0.800 -2.400 1.600 1.600z" fill="#0b0b0b" stroke="#0b0b0b" stroke-width="0.600"/>
      <rect x="72" y="592" width="9.200" height="1" fill="#0b0b0b"/>
      <rect x="72" y="594.600" width="9.200" height="2" fill="#0b0b0b"/>
      <rect x="72" y="598.600" width="9.200" height="3.200" fill="#0b0b0b"/>
    </g>
    <rect x="24" y="613" width="124" height="1" fill="#d2cfc8"/>
    <!-- paint tools -->
    <g>
      <path d="M30.400 636 L31 632.600 L36.800 621.400 L38.800 622.400 L33 633.800Z" fill="#7f94d6" stroke="#3a4784" stroke-width="0.700"/>
      <path d="M30.400 636 l0.500 -3 2 1z" fill="#111"/>
      <path d="M34 626.800 l2 1" stroke="#dfe5fa" stroke-width="0.600"/>
    </g>
    <g>
      <path d="M56.600 630.400 L60.600 621.600 L63 622.600 L59 631.600Z" fill="#7f94d6" stroke="#3a4784" stroke-width="0.700"/>
      <path d="M55.200 631 l3.600 1.600 -1.600 2.800 q-3 1.600 -8 0.800 q3.600 -1 6 -5.200z" fill="#222"/>
      <path d="M48.600 636.400 q5 0.600 8.600 -1" stroke="#8f9fe0" stroke-width="0.800" fill="none"/>
    </g>
    <g>
      <path d="M68.600 629.600 L75.400 623.400 L81 630.200 L74.200 636.400Z" fill="url(#gbucket)" stroke="#4a5690" stroke-width="0.700"/>
      <path d="M72.800 626.200 q-0.200 -4.800 2.600 -5 q2.600 0.200 3 5.200" fill="none" stroke="#666" stroke-width="1"/>
      <path d="M79.800 627 q4.800 1.600 3.600 10 l-2.400 0.200 q0.800 -4 -2.600 -7.400z" fill="#6d86cf"/>
      <path d="M81.400 629.400 q1.800 2.400 1.200 6.600" fill="none" stroke="#aab8ea" stroke-width="0.800"/>
    </g>
    <g>
      <path d="M91.200 636.600 V628.600 q0 -2 2 -3.200 v-2.800 h3 v2.800 q2.200 1.200 2.200 3.200 V636.600Z" fill="#e8e9f0" stroke="#444" stroke-width="0.800"/>
      <rect x="94.400" y="630" width="2.600" height="5" fill="#a9b6e4" stroke="#5a68a8" stroke-width="0.600"/>
      <rect x="93.200" y="621.400" width="3.400" height="2" fill="#111"/>
      <path d="M98.200 622.600 l1 -0.600 M99.400 621 l1 -0.800 M100.600 623 l1 -0.200 M101.400 621.400 l0.800 -0.600" stroke="#aaa" stroke-width="0.700"/>
    </g>
    <path d="M114.600 623.400 H124.800 L121 629 L124.800 634.600 H110.800 V627.400Z" fill="#f4f4f3" stroke="#444" stroke-width="0.900"/>
    <path d="M134.800 622.600 q3 -0.800 3 2.200 q0 2 -1.400 3.600 q-1.400 2.200 0.200 3.800 q1.400 1.200 3 0" fill="none" stroke="#777" stroke-width="0.800"/>
    <path d="M140 632.600 h4.400 M142.200 630.400 v4.400" stroke="#222" stroke-width="0.800"/>
    <rect x="27.500" y="646.500" width="13" height="11" fill="none" stroke="#555" stroke-width="1.100" stroke-dasharray="2.800 1.500"/>
    <g>
      <path d="M48.400 653.400 L55.200 646 H63 L56.400 653.400Z" fill="#f3f4e2" stroke="#8a8b78" stroke-width="0.600"/>
      <path d="M48.400 653.400 H56.400 V657.600 H49.400 q-1 0 -1 -1Z" fill="#e9ebcf" stroke="#8a8b78" stroke-width="0.600"/>
      <path d="M56.400 653.400 L63 646 V650.400 L56.400 657.600Z" fill="#c9cbb0" stroke="#8a8b78" stroke-width="0.600"/>
    </g>
    <g transform="translate(0 81)">
      <path d="M30 596.600 L35.200 592.600 L39.200 597.600 L34 601.600Z" fill="#fff" stroke="#0b0b0b" stroke-width="1.300"/>
      <path d="M35.600 592 q3.600 0.400 4.200 4.400 v5" fill="none" stroke="#0b0b0b" stroke-width="1.900"/>
      <path d="M51 601.600 L52.600 598 L58.200 592.600 L59.800 594.200 L54.400 599.800Z" fill="#fff" stroke="#0b0b0b" stroke-width="0.900"/>
      <path d="M51 601.600 l0.800 -2.400 1.600 1.600z" fill="#0b0b0b" stroke="#0b0b0b" stroke-width="0.600"/>
      <rect x="72" y="592" width="9.200" height="1" fill="#0b0b0b"/>
      <rect x="72" y="594.600" width="9.200" height="2" fill="#0b0b0b"/>
      <rect x="72" y="598.600" width="9.200" height="3.200" fill="#0b0b0b"/>
    </g>
    <g fill="#858585"><rect x="96.05" y="672.65" width="1.9" height="1.9" transform="rotate(45 97 673.6)"/><rect x="93.95" y="674.75" width="1.9" height="1.9" transform="rotate(45 94.9 675.7)"/><rect x="98.15" y="674.75" width="1.9" height="1.9" transform="rotate(45 99.1 675.7)"/><rect x="91.85" y="676.85" width="1.9" height="1.9" transform="rotate(45 92.8 677.8)"/><rect x="96.05" y="676.85" width="1.9" height="1.9" transform="rotate(45 97 677.8)"/><rect x="100.25" y="676.85" width="1.9" height="1.9" transform="rotate(45 101.2 677.8)"/><rect x="93.95" y="678.95" width="1.9" height="1.9" transform="rotate(45 94.9 679.9)"/><rect x="98.15" y="678.95" width="1.9" height="1.9" transform="rotate(45 99.1 679.9)"/><rect x="96.05" y="681.05" width="1.9" height="1.9" transform="rotate(45 97 682)"/></g>
    <path d="M118 673.600 L122.200 677.800 L118 682 L113.800 677.800Z" fill="none" stroke="#808080" stroke-width="2.200"/>

  </svg>
</div>

<div class="win" id="stack">
  <div class="tb">
    <i class="tl" style="left:8px;top:5px"></i><i class="tl" style="left:28px;top:5px"></i><i class="tl" style="left:48px;top:5px"></i>
    <div class="ttl">Untitled 1 *</div>
    <svg class="abs" style="left:380px;top:3px" width="17" height="17" viewBox="556 116 17 17">
      <path d="M565 117.100 H571.900 V124 L569.700 121.800 L567 124.500 L564.500 122 L567.200 119.300Z" fill="#c6c6c6"/>
      <path d="M558.100 124 V130.900 H565 L562.800 128.700 L565.500 126 L563 123.500 L560.300 126.200Z" fill="#c6c6c6"/>
    </svg>
  </div>
</div>
</body>
</html>
